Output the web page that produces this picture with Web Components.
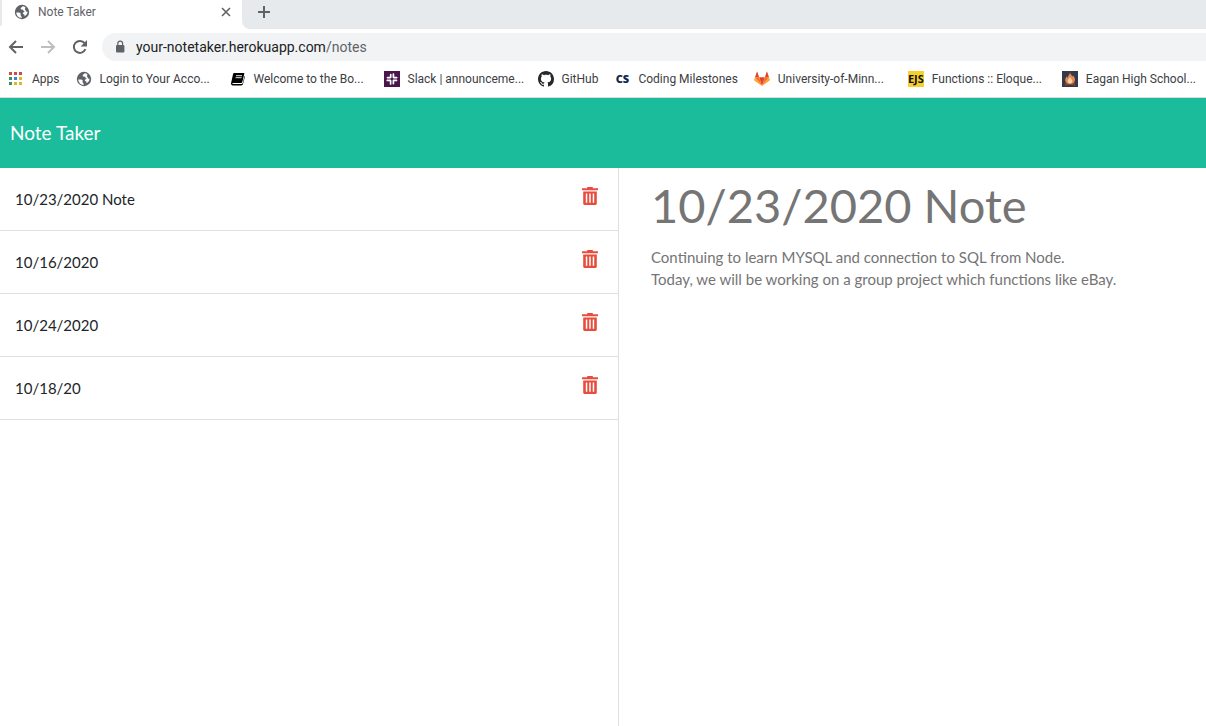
<!DOCTYPE html>
<html lang="en">
<head>
<meta charset="utf-8">
<title>Note Taker</title>
<style>
  html, body { margin: 0; height: 100%; background: #fff; }
  body { font-family: Lato, sans-serif; font-size: 15px; color: #212529; font-variant-ligatures: none; }
</style>
</head>
<body>
<note-window></note-window>

<script>
const ICONS = {
  globe: `<svg viewBox="0 0 16 16"><circle cx="8" cy="8" r="7.2" fill="#5f6368"/><path d="M2.3 8.6c1.600 0 3.600-.3 4.200.7.6 1-.6 1.500.4 2.400.6.5.9 1.200.7 2.300-2.800 0-5.200-2.200-5.300-5.400z" fill="#fff"/><path d="M8.600 2.300c-.2 1.100-1.700.9-1.900 2-.2 1.100.6 1.300 1.500 1.200.8-.1.700 1.100 1.600 1.300 1 .2.700 1.300 0 1.500-1.200.3-1.300 1.300-.4 1.800.9.500 1.300 1 1.200 2.200 1.900-1 3-2.700 3-4.700-1.200.5-1.900 0-1.900-1s-1-.9-.8-1.900c.1-.6.6-.7.6-1.300-.8-.7-1.800-1.100-2.900-1.100z" fill="#fff"/></svg>`,
  apps: `<svg viewBox="0 0 16 16"><path fill="#d14a42" d="M1 1h3v3H1zM6 1h3v3H6zM11 1h3v3h-3z"/><path fill="#3f8f5f" d="M1 6h3v3H1zM1 11h3v3H1z"/><path fill="#3b7fe0" d="M6 6h3v3H6z"/><path fill="#e2b32e" d="M11 6h3v3h-3zM6 11h3v3H6zM11 11h3v3h-3z"/></svg>`,
  book: `<svg viewBox="0 0 16 16"><path d="M4.500 2h9.200c.5 0 .7.300.6.800L12.300 11c-.1.600-.5.900-1.100.9H3c-.8 0-.9 1.100 0 1.100h8.400c.8 0 1.200-.4 1.400-1.100l1.700-7.200c.4.300.5.700.3 1.300l-1.800 7c-.3 1-.9 1.400-1.900 1.400H2.900C1.500 14.400.8 13.300 1.100 12L3 3.300C3.200 2.400 3.700 2 4.500 2z"/><path d="M6 4.700h6M5.600 6.700h6" stroke="#fff" stroke-width=".9"/></svg>`,
  slack: `<svg viewBox="0 0 16 16"><path fill="#4a154b" d="M0 0h16v16H0z"/><g stroke="#fff" stroke-width="1.700" stroke-linecap="round"><path d="M6.700 3.600v2.700M3.500 6.600h3M9.400 3v3.300M9.700 6.600h3M3.300 9.400h3M6.600 9.700v3.200M9.500 9.400h3M9.400 9.600v3"/></g></svg>`,
  github: `<svg viewBox="0 0 16 16"><path fill="#24292e" fill-rule="evenodd" d="M8 0C3.580 0 0 3.580 0 8c0 3.540 2.290 6.530 5.470 7.590.4.070.55-.17.55-.38 0-.19-.01-.82-.01-1.490-2.010.37-2.530-.49-2.690-.94-.09-.23-.48-.94-.82-1.130-.28-.15-.68-.52-.01-.53.63-.01 1.080.58 1.230.82.72 1.210 1.870.87 2.330.66.07-.52.28-.87.51-1.070-1.780-.2-3.640-.89-3.640-3.950 0-.87.31-1.590.82-2.150-.08-.2-.36-1.020.08-2.120 0 0 .67-.21 2.200.82.64-.18 1.320-.27 2-.27s1.360.09 2 .27c1.530-1.040 2.200-.82 2.200-.82.44 1.100.16 1.920.08 2.120.51.56.82 1.270.82 2.150 0 3.070-1.870 3.750-3.650 3.950.29.25.54.73.54 1.480 0 1.070-.01 1.930-.01 2.200 0 .21.15.46.55.38A8.010 8.010 0 0 0 16 8c0-4.420-3.580-8-8-8z"/></svg>`,
  gitlab: `<svg viewBox="0 0 16 16"><path fill="#e24329" d="M8 15 5.100 6.200h5.800z"/><path fill="#fc6d26" d="M8 15 5.100 6.200H1zM8 15l2.900-8.800H15z"/><path fill="#fca326" d="M1 6.200.1 8.900c-.1.300 0 .5.200.7L8 15zM15 6.200l.9 2.700c.1.300 0 .5-.2.700L8 15z"/><path fill="#e24329" d="M1 6.200h4.100L3.400 1c-.1-.3-.5-.3-.6 0zM15 6.200h-4.100L12.600 1c.1-.3.5-.3.6 0z"/></svg>`,
  fire: `<svg viewBox="0 0 16 16"><path fill="#34394c" d="M0 0h16v16H0z"/><path d="M3 14l10-2M3 12l10 2" stroke="#8a4a2c" stroke-width="1.500"/><path fill="#e58a55" d="M8 1.500c.4 1.700 2.200 2.600 2.300 4.300.5-.4.600-1 .6-1.500 1.500 1.500 2.300 3.200 2 5-.3 2.300-2.200 3.700-4.800 3.700-2.700 0-4.700-1.300-4.900-3.700-.1-1.600.7-2.900 1.600-3.900.1.700.3 1.100.7 1.400C5.700 4.700 7.800 3.600 8 1.500z"/><path fill="#f8d3a4" d="M8 6c.2 1.300 2.300 2.200 2.300 4.200 0 1.400-1 2.200-2.300 2.200s-2.300-.9-2.300-2.200C5.700 8.300 7.700 7.600 8 6z"/></svg>`,
  cs: `<span class="mark cs">CS</span>`,
  ejs: `<span class="mark ejs">EJS</span>`,
  back: `<svg viewBox="0 0 16 16"><path d="M15 8H2M8 2 2 8l6 6" fill="none" stroke="#5f6368" stroke-width="2"/></svg>`,
  forward: `<svg viewBox="0 0 16 16"><path d="M1 8h13M8 2l6 6-6 6" fill="none" stroke="#bcbec1" stroke-width="2"/></svg>`,
  reload: `<svg viewBox="0 0 16 16"><path d="M13.400 10.200A6 6 0 1 1 12.600 4.200" fill="none" stroke="#5f6368" stroke-width="2"/><path d="M15 1v6.400H8.600z" fill="#5f6368"/></svg>`,
  lock: `<svg viewBox="0 0 16 16"><rect x="4" y="6" width="8.400" height="7.500" rx="1" fill="#5f6368"/><path d="M5.800 6.500V4.600a2.400 2.400 0 0 1 4.800 0v1.900" fill="none" stroke="#5f6368" stroke-width="1.200"/></svg>`,
  close: `<svg viewBox="0 0 16 16"><path d="M4 4l8 8M12 4l-8 8" stroke="#5f6368" stroke-width="1.600"/></svg>`,
  plus: `<svg viewBox="0 0 16 16"><path d="M8 2v12M2 8h12" stroke="#5f6368" stroke-width="2"/></svg>`,
  trash: `<svg viewBox="0 0 16 18"><path fill="#e74c3c" fill-rule="evenodd" d="M5.200 0h5.600v1.300H16v2H0v-2h5.200zM1.200 4.500h13.600v12.100c0 .9-.5 1.400-1.400 1.400H2.600c-.9 0-1.400-.5-1.400-1.400zM3.800 6.500v9.300h1.500V6.500zM7.250 6.500v9.300h1.500V6.500zM10.700 6.500v9.300h1.500V6.500z"/></svg>`
};

const define = (name, render) => customElements.define(name, class extends HTMLElement {
  connectedCallback() {
    if (this.shadowRoot) return;
    const template = document.createElement('template');
    template.innerHTML = render(this);
    this.attachShadow({ mode: 'open' }).append(template.content.cloneNode(true));
  }
});

define('ui-icon', el => `
  <style>
    :host { display: block; flex: none; width: 16px; height: 16px; }
    svg { display: block; width: 100%; height: 100%; }
    .mark { display: grid; place-items: center; width: 16px; height: 16px; }
    .cs { color: #12284c; font: 800 11px/16px "Open Sans", sans-serif; }
    .ejs { background: #f5d02e; color: #111; font: bold 11px/16px "Liberation Sans Narrow", "Open Sans", sans-serif; }
  </style>${ICONS[el.getAttribute('name')]}`);

define('icon-button', el => `
  <style>
    :host { display: block; flex: none; }
    button { display: grid; place-items: center; margin: 0; padding: 0; border: 0; background: none; cursor: pointer; }
    ui-icon { width: var(--icon-width, 16px); height: var(--icon-height, 16px); }
  </style>
  <button type="button" aria-label="${el.getAttribute('label')}"><ui-icon name="${el.getAttribute('icon')}"></ui-icon></button>`);

define('browser-tabs', () => `
  <style>
    :host { display: flex; height: 29px; background: #fff; }
    .edge { width: 2px; height: 26px; background: #e7eaed; border-bottom-right-radius: 2px; }
    .tab { box-sizing: border-box; display: flex; align-items: center; width: 240px; height: 24px; padding: 0 8px 0 12px; gap: 8px; color: #5f6368; font-size: 12px; }
    .title { flex: 1; }
    .rest { flex: 1; display: flex; align-items: center; padding: 0 14px 5px; background: #e7eaed; border-bottom-left-radius: 8px; }
  </style>
  <div class="edge"></div>
  <div class="tab"><ui-icon name="globe"></ui-icon><span class="title">Note Taker</span><icon-button icon="close" label="Close tab"></icon-button></div>
  <div class="rest"><icon-button icon="plus" label="New tab"></icon-button></div>`);

define('address-bar', () => `
  <style>
    :host { display: flex; align-items: center; height: 36px; padding-left: 8px; gap: 16px; }
    .url { flex: 1; display: flex; align-items: center; height: 28px; padding-left: 10px; gap: 8px; margin-left: -2px; background: #f1f3f4; border-radius: 14px 0 0 14px; font-size: 14px; color: #202124; }
    .path { color: #5f6368; }
  </style>
  <icon-button icon="back" label="Back"></icon-button>
  <icon-button icon="forward" label="Forward"></icon-button>
  <icon-button icon="reload" label="Reload"></icon-button>
  <div class="url"><ui-icon name="lock"></ui-icon><span>your-notetaker.herokuapp.com<span class="path">/notes</span></span></div>`);

define('book-mark', el => `
  <style>
    :host { display: block; flex: none; }
    :host([wide]) { width: 154px; }
    a { display: flex; align-items: center; gap: 8px; color: #3c4043; text-decoration: none; white-space: nowrap; }
  </style>
  <a href="#"><ui-icon name="${el.getAttribute('icon')}"></ui-icon><span><slot></slot></span></a>`);

define('bookmarks-bar', () => `
  <style>
    :host { display: flex; align-items: center; box-sizing: border-box; height: 33px; padding: 0 0 5px 8px; border-bottom: 1px solid #dadce0; font-size: 12px; overflow: hidden; }
    .short { margin-right: 16px; }
  </style>
  <book-mark class="short" icon="apps">Apps</book-mark>
  <book-mark wide icon="globe">Login to Your Acco...</book-mark>
  <book-mark wide icon="book">Welcome to the Bo...</book-mark>
  <book-mark wide icon="slack">Slack | announceme...</book-mark>
  <book-mark class="short" icon="github">GitHub</book-mark>
  <book-mark class="short" icon="cs">Coding Milestones</book-mark>
  <book-mark wide icon="gitlab">University-of-Minn...</book-mark>
  <book-mark wide icon="ejs">Functions :: Eloque...</book-mark>
  <book-mark wide icon="fire">Eagan High School...</book-mark>`);

define('app-header', () => `
  <style>
    :host { display: flex; align-items: center; box-sizing: border-box; height: 70px; padding: 0 10px 2px; background: #1abc9c; }
    a { color: #fff; font-size: 19px; text-decoration: none; }
  </style>
  <a href="#"><slot></slot></a>`);

define('note-item', () => `
  <style>
    :host { display: flex; align-items: flex-start; justify-content: space-between; height: 62px; padding: 0 20px 0 15px; border-bottom: 1px solid #dfdfdf; }
    span { line-height: 63px; }
    icon-button { --icon-height: 18px; margin-top: 19px; }
  </style>
  <span><slot></slot></span><icon-button icon="trash" label="Delete note"></icon-button>`);

define('note-list', () => `
  <style>:host { display: block; border-right: 1px solid #dfdfdf; }</style><slot></slot>`);

define('note-editor', () => `
  <style>
    :host { display: block; padding: 10px 32px; }
    input, textarea { display: block; box-sizing: border-box; width: 100%; margin: 0; padding: 0; border: 0; outline: 0; background: none; font-family: inherit; color: #757575; resize: none; }
    input { height: 54px; font-size: 47px; }
    textarea { height: 400px; margin-top: 14px; font-size: 15px; line-height: 22px; overflow: hidden; }
  </style>
  <input type="text" aria-label="Note title" value="10/23/2020 Note" readonly>
  <textarea aria-label="Note text" readonly>Continuing to learn MYSQL and connection to SQL from Node.
Today, we will be working on a group project which functions like eBay.</textarea>`);

define('note-window', () => `
  <style>
    :host { display: flex; flex-direction: column; min-height: 100vh; }
    header { font-family: Roboto, sans-serif; }
    main { flex: 1; display: grid; grid-template-columns: 619fr 587fr; }
  </style>
  <header><browser-tabs></browser-tabs><address-bar></address-bar><bookmarks-bar></bookmarks-bar></header>
  <app-header>Note Taker</app-header>
  <main>
    <note-list>
      <note-item>10/23/2020 Note</note-item>
      <note-item>10/16/2020</note-item>
      <note-item>10/24/2020</note-item>
      <note-item>10/18/20</note-item>
    </note-list>
    <note-editor></note-editor>
  </main>`);
</script>
</body>
</html>
